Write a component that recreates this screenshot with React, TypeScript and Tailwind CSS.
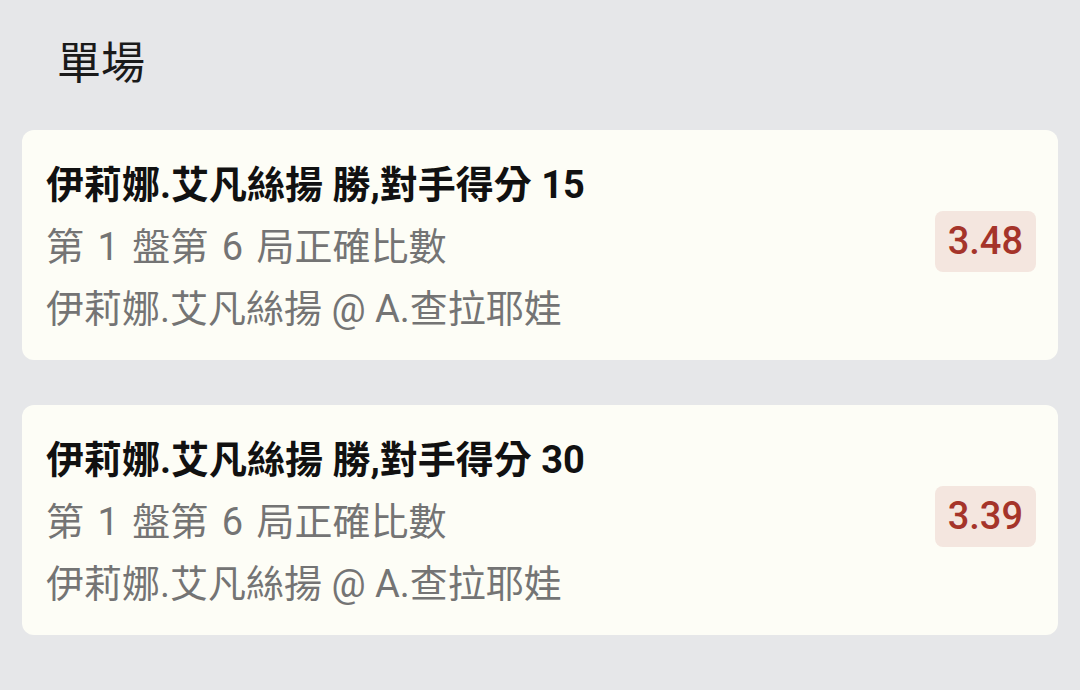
import React from 'react';

interface BetCardProps {
  title: string;
  market: string;
  match: string;
  odds: string;
}

function BetCard({ title, market, match, odds }: BetCardProps) {
  return (
    <div className="mx-[22px] flex items-center rounded-[12px] bg-[#fdfdf6] pl-[24px] pr-[22px] pt-[24px] pb-[20px]">
      <div className="flex-1 text-[38px] leading-[62px]">
        <p className="font-bold text-[#111111]">{title}</p>
        <p className="text-[#747474] [word-spacing:4px]">{market}</p>
        <p className="text-[#747474]">{match}</p>
      </div>
      <div className="mb-[11px] rounded-[8px] bg-[#f4e6df] px-[13px] py-[12px] text-[38px] font-medium leading-[37px] text-[#a5342a]">
        {odds}
      </div>
    </div>
  );
}

export default function App() {
  return (
    <div
      className="min-h-[690px] bg-[#e6e7e9] pt-[35px]"
      style={{ fontFamily: 'Roboto, "Noto Sans CJK TC", sans-serif' }}
    >
      <h1 className="pl-[57px] text-[44px] leading-[58px] text-[#1a1a1a]">單場</h1>
      <div className="mt-[37px] flex flex-col gap-[45px]">
        <BetCard
          title="伊莉娜.艾凡絲揚 勝,對手得分 15"
          market="第 1 盤第 6 局正確比數"
          match="伊莉娜.艾凡絲揚 @ A.查拉耶娃"
          odds="3.48"
        />
        <BetCard
          title="伊莉娜.艾凡絲揚 勝,對手得分 30"
          market="第 1 盤第 6 局正確比數"
          match="伊莉娜.艾凡絲揚 @ A.查拉耶娃"
          odds="3.39"
        />
      </div>
    </div>
  );
}
